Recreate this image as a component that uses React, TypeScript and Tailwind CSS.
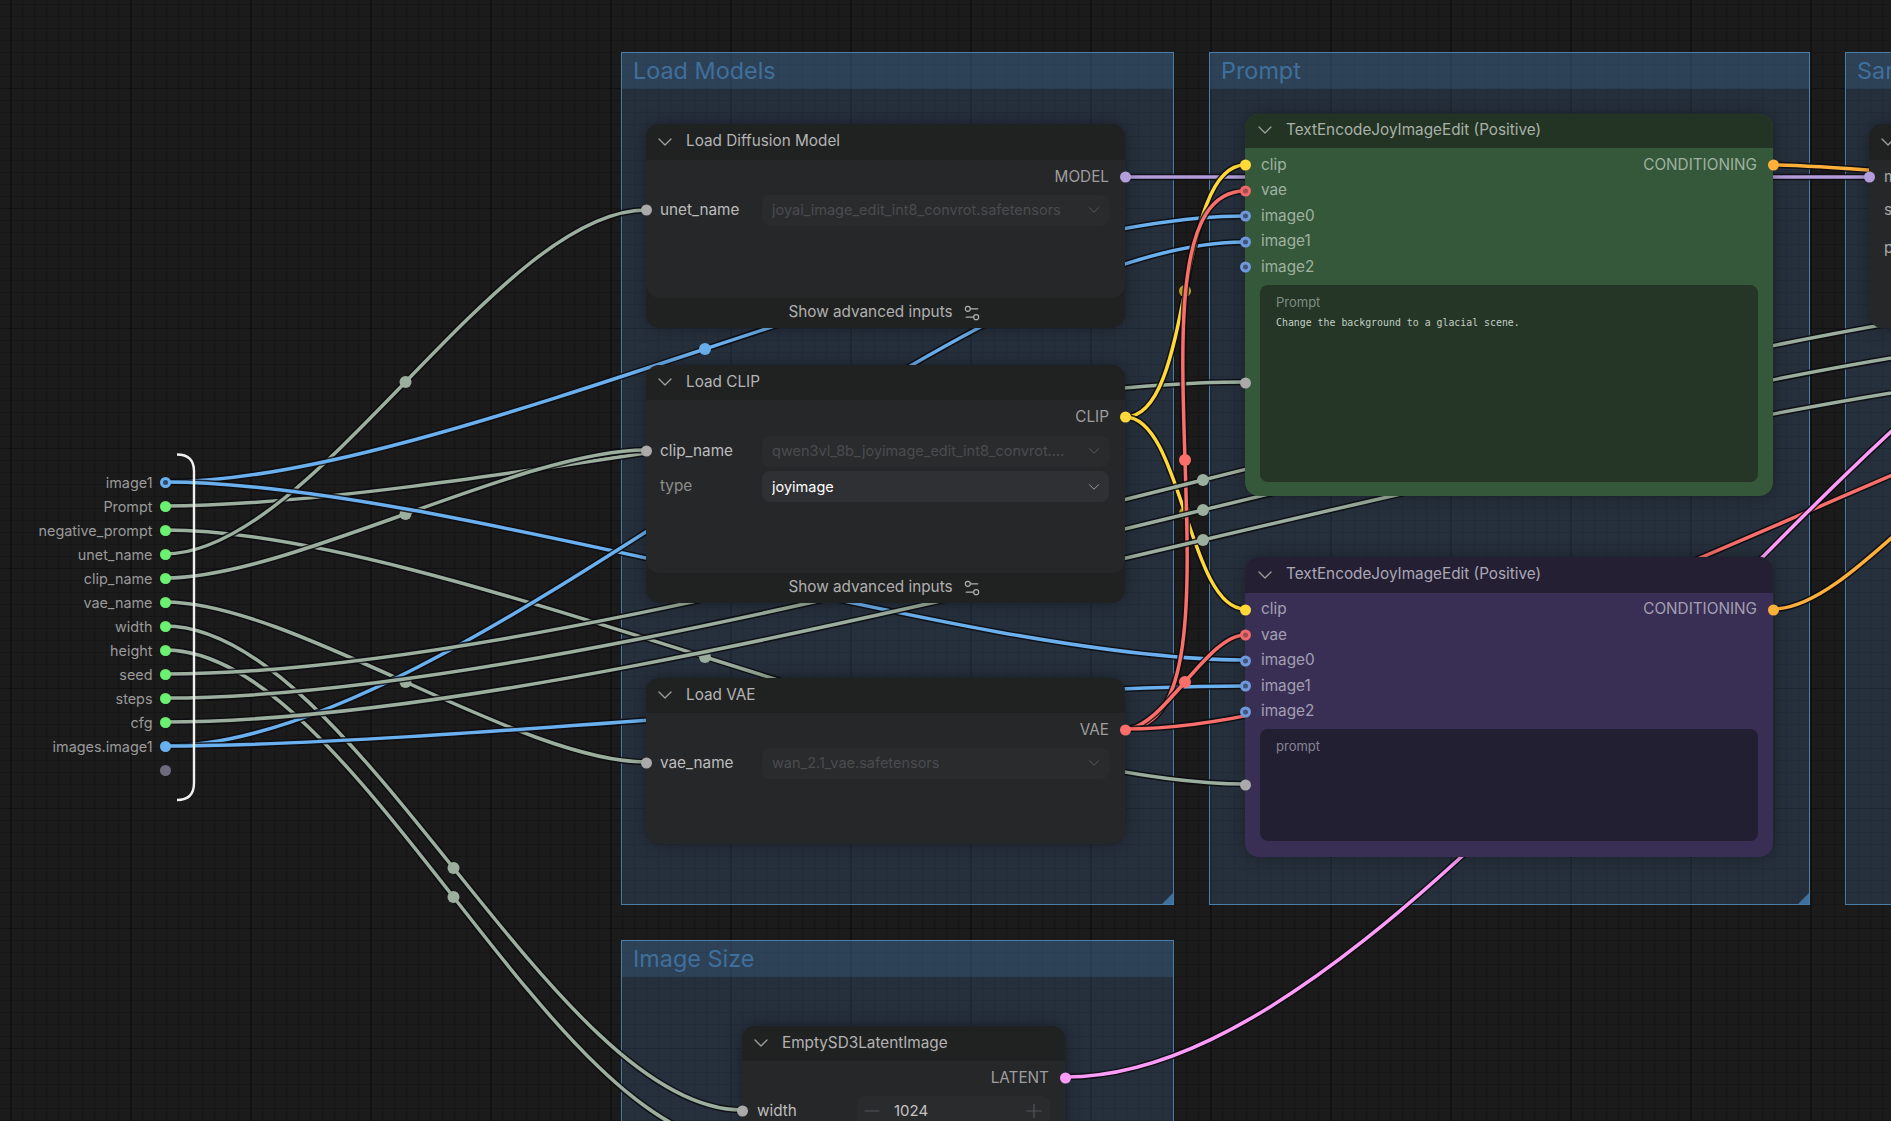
import React from "react";
import { ChevronDown, Minus, Plus, Settings2 } from "lucide-react";

// link colours
const GREY = "#9cae9d";
const BLUE = "#6bb0ee";
const YELLOW = "#ffd83a";
const RED = "#fb6f6a";
const PURPLE = "#b39ddb";
const ORANGE = "#ffb03b";
const PINK = "#ff9cf9";

type Link = { a: number[]; b: number[]; color: string; mid?: boolean; dim?: boolean };

const links: Link[] = [
  { a: [165, 506], b: [1245, 382], color: GREY, mid: true },
  { a: [165, 530], b: [1245, 784], color: GREY, mid: true },
  { a: [165, 554], b: [646, 210], color: GREY, mid: true },
  { a: [165, 578], b: [646, 450], color: GREY, mid: true },
  { a: [165, 602], b: [646, 762], color: GREY, mid: true },
  { a: [165, 626], b: [742, 1110], color: GREY, mid: true },
  { a: [165, 650], b: [742, 1144], color: GREY, mid: true },
  { a: [165, 482], b: [1245, 216], color: BLUE, mid: true },
  { a: [165, 482], b: [1245, 660], color: BLUE, mid: true },
  { a: [165, 746], b: [1245, 242], color: BLUE, mid: true },
  { a: [165, 746], b: [1245, 686], color: BLUE, mid: true },
  { a: [1125, 177], b: [1869, 177], color: PURPLE },
  { a: [1125, 417], b: [1245, 165], color: YELLOW, mid: true, dim: true },
  { a: [1125, 417], b: [1245, 609], color: YELLOW, mid: true, dim: true },
  { a: [1125, 729], b: [1245, 191], color: RED, mid: true },
  { a: [1125, 729], b: [1245, 635], color: RED, mid: true },
  { a: [1125, 729], b: [2505, 288], color: RED },
  { a: [165, 674], b: [2241, 286], color: GREY, mid: true },
  { a: [165, 698], b: [2241, 322], color: GREY, mid: true },
  { a: [165, 722], b: [2241, 358], color: GREY, mid: true },
  { a: [1065, 1077], b: [2300, 200], color: PINK },
  { a: [1773, 165], b: [2000, 178], color: ORANGE },
  { a: [1773, 609], b: [2040, 440], color: ORANGE },
];

function spline(a: number[], b: number[]) {
  const d = Math.hypot(b[0] - a[0], b[1] - a[1]) * 0.25;
  return `M${a[0]} ${a[1]} C${a[0] + d} ${a[1]} ${b[0] - d} ${b[1]} ${b[0]} ${b[1]}`;
}

const Links = () => (
  <svg className="absolute inset-0 h-[1121px] w-[1891px]" viewBox="0 0 1891 1121" fill="none">
    {links.map((l, i) => (
      <g key={i}>
        <path d={spline(l.a, l.b)} stroke="#0c0c10" strokeWidth={6.5} opacity={0.85} />
        <path d={spline(l.a, l.b)} stroke={l.color} strokeWidth={3.5} />
        {l.mid && (
          <circle
            cx={(l.a[0] + l.b[0]) / 2}
            cy={(l.a[1] + l.b[1]) / 2}
            r={6}
            fill={l.color}
            opacity={l.dim ? 0.7 : 1}
          />
        )}
      </g>
    ))}
  </svg>
);

const Group = ({ title, className }: { title: string; className: string }) => (
  <div className={`absolute border border-[#4a7da8] bg-[#476f9f40] ${className}`}>
    <div className="flex h-[36px] items-center bg-[#4678a840] pl-[11px] text-[23.4px] leading-none text-[#3f6f9b]">
      {title}
    </div>
    <div className="absolute bottom-0 right-0 h-[11px] w-[11px] bg-[#3f6f9b] [clip-path:polygon(100%_0,100%_100%,0_100%)]" />
  </div>
);

const Dot = ({ className }: { className: string }) => (
  <span className={`absolute top-1/2 h-[11px] w-[11px] -translate-y-1/2 rounded-full ${className}`} />
);

const Header = ({ title, className }: { title: string; className: string }) => (
  <div className={`flex items-center rounded-t-[14px] ${className}`}>
    <ChevronDown size={24} strokeWidth={1.25} className="ml-[7px] text-[#a0a0a0]" />
    <span className="ml-[9px] whitespace-nowrap text-[15.3px] text-[#b4b4b4]">{title}</span>
  </div>
);

const OutputRow = ({ label, dot }: { label: string; dot: string }) => (
  <div className="relative flex h-[19px] items-center justify-end pr-[16px] text-[15.3px] text-[#9e9e9e]">
    {label}
    <Dot className={`right-[-5.5px] ${dot}`} />
  </div>
);

const Combo = ({ label, value, off, linked }: { label: string; value: string; off?: boolean; linked?: boolean }) => (
  <div className="relative flex h-[31px] items-center pl-[14px] pr-[16px]">
    {linked && <Dot className="left-[-5.5px] bg-[#aaaaaa]" />}
    <span className={`w-[102px] shrink-0 text-[15.3px] ${linked ? "text-[#bdbdbd]" : "text-[#8d8d8d]"}`}>{label}</span>
    <div
      className={`flex h-full min-w-0 flex-1 items-center justify-between rounded-[8px] pl-[10px] pr-[6px] ${
        off ? "bg-[#2a2b2d] text-[14.5px] text-[#4b4b4d]" : "bg-[#2f3033] text-[14.5px] text-white"
      }`}
    >
      <span className="truncate">{value}</span>
      <ChevronDown size={18} strokeWidth={1.3} className={`shrink-0 ${off ? "text-[#5c5c5e]" : "text-[#a0a0a0]"}`} />
    </div>
  </div>
);

const AdvancedFooter = () => (
  <div className="flex h-[30.5px] items-center justify-center gap-[9px] pr-[1px] text-[15.3px] text-[#b0b0b0]">
    Show advanced inputs
    <Settings2 size={20} strokeWidth={1.4} />
  </div>
);

const EncodeRow = ({ label, dot, right, text }: { label: string; dot: string; right?: string; text: string }) => (
  <div className={`relative flex h-[25.5px] items-center justify-between pl-[16px] pr-[16px] text-[15.3px] ${text}`}>
    <span>{label}</span>
    {right && <span>{right}</span>}
    <Dot className={`left-[-5.5px] ${dot}`} />
    {right && <Dot className="right-[-5.5px] bg-[#ffb03b]" />}
  </div>
);

const ring = "border-[3px] border-[#7098dc] bg-[#3f5677]";
const redRing = "border-[3px] border-[#f0696a] bg-[#a04c50]";

const ioRows = [
  ["image1", "ring"],
  ["Prompt", "green"],
  ["negative_prompt", "green"],
  ["unet_name", "green"],
  ["clip_name", "green"],
  ["vae_name", "green"],
  ["width", "green"],
  ["height", "green"],
  ["seed", "green"],
  ["steps", "green"],
  ["cfg", "green"],
  ["images.image1", "blue"],
  ["", "empty"],
];

const dotColor: Record<string, string> = {
  ring: "border-[3px] border-[#6bb0ee] bg-[#2f4a6a]",
  blue: "bg-[#6bb0ee]",
  green: "bg-[#6bf06f]",
  empty: "bg-[#6e6b7c]",
};

const InputPanel = () => (
  <div className="absolute left-0 top-[470.5px] w-[170.5px]">
    {ioRows.map(([name, kind], i) => (
      <div key={i} className="flex h-[24px] items-center justify-end gap-[7px] text-[14.4px] text-[#9a9a9a]">
        <span>{name}</span>
        <span className={`h-[11px] w-[11px] rounded-full ${dotColor[kind]}`} />
      </div>
    ))}
    <svg className="absolute left-[176px] top-[-18px] h-[352px] w-[20px]" viewBox="0 0 20 352" fill="none">
      <path d="M1 1.5 Q18 1.5 18 18 V330 Q18 347 1 347" stroke="#f0f0f0" strokeWidth={2.4} />
    </svg>
  </div>
);

const nodeBase = "absolute rounded-[14px] bg-[#202121] shadow-[0_0_18px_rgba(0,0,0,0.35)]";

export default function App() {
  return (
    <div className="relative h-[1121px] w-[1891px] overflow-hidden bg-[#1b1b1b] bg-[linear-gradient(to_right,#121212_2px,transparent_2px),linear-gradient(to_bottom,#121212_1px,transparent_1px),linear-gradient(to_right,#161616_1px,transparent_1px),linear-gradient(to_bottom,#161616_1px,transparent_1px)] bg-[size:120px_120px,120px_120px,12px_12px,12px_12px] bg-[position:10px_88px,10px_88px,10px_4px,10px_4px] font-[family-name:Inter,sans-serif]">
      <Group title="Load Models" className="left-[621px] top-[52px] h-[853px] w-[553px]" />
      <Group title="Prompt" className="left-[1209px] top-[52px] h-[853px] w-[601px]" />
      <Group title="Sampler" className="left-[1845px] top-[52px] h-[853px] w-[400px]" />
      <Group title="Image Size" className="left-[621px] top-[940px] h-[300px] w-[553px]" />

      <Links />

      {/* Load Diffusion Model */}
      <div className={`${nodeBase} left-[646px] top-[123.5px] w-[479px]`}>
        <Header title="Load Diffusion Model" className="h-[36px] bg-[#202121]" />
        <div className="flex h-[138px] flex-col gap-[8px] rounded-b-[14px] bg-[#262729] pt-[8px]">
          <OutputRow label="MODEL" dot="bg-[#b39ddb]" />
          <Combo label="unet_name" value="joyai_image_edit_int8_convrot.safetensors" off linked />
        </div>
        <AdvancedFooter />
      </div>

      {/* Load CLIP */}
      <div className={`${nodeBase} left-[646px] top-[364.5px] w-[479px]`}>
        <Header title="Load CLIP" className="h-[35px] bg-[#202121]" />
        <div className="flex h-[173px] flex-col rounded-b-[14px] bg-[#262729] pt-[8px]">
          <OutputRow label="CLIP" dot="bg-[#ffd83a]" />
          <div className="mt-[9px] flex flex-col gap-[4.5px]">
            <Combo label="clip_name" value="qwen3vl_8b_joyimage_edit_int8_convrot.…" off linked />
            <Combo label="type" value="joyimage" />
          </div>
        </div>
        <AdvancedFooter />
      </div>

      {/* Load VAE */}
      <div className={`${nodeBase} left-[646px] top-[677.5px] w-[479px]`}>
        <Header title="Load VAE" className="h-[35px] bg-[#202121]" />
        <div className="flex h-[131px] flex-col gap-[8px] rounded-b-[14px] bg-[#262729] pt-[8px]">
          <OutputRow label="VAE" dot="bg-[#ff6e6a]" />
          <Combo label="vae_name" value="wan_2.1_vae.safetensors" off linked />
        </div>
      </div>

      {/* EmptySD3LatentImage */}
      <div className={`${nodeBase} left-[742px] top-[1025.5px] w-[323px]`}>
        <Header title="EmptySD3LatentImage" className="h-[35px] bg-[#202121]" />
        <div className="flex h-[120px] flex-col gap-[8px] bg-[#262729] pt-[8px]">
          <OutputRow label="LATENT" dot="bg-[#ff9cf9]" />
          <div className="relative flex h-[31px] items-center pl-[15px] pr-[15px]">
            <Dot className="left-[-5.5px] bg-[#aaaaaa]" />
            <span className="w-[100px] shrink-0 text-[15.3px] text-[#bdbdbd]">width</span>
            <div className="flex h-full flex-1 items-center rounded-[8px] bg-[#2a2b2d] pl-[3px] pr-[4px] text-[15px] text-[#c4c4c4]">
              <Minus size={24} strokeWidth={1.2} className="text-[#55555a]" />
              <span className="ml-[10px] flex-1">1024</span>
              <Plus size={24} strokeWidth={1.2} className="text-[#55555a]" />
            </div>
          </div>
        </div>
      </div>

      {/* TextEncodeJoyImageEdit, positive */}
      <div className="absolute left-[1245px] top-[113.5px] h-[382px] w-[528px] rounded-[14px] bg-[#35583a] shadow-[0_0_18px_rgba(0,0,0,0.3)]">
        <Header title="TextEncodeJoyImageEdit (Positive)" className="h-[34.5px] bg-[#233324] pb-[1px] [&>svg]:ml-[8px] [&>span]:text-[#a8b2a8]" />
        <div className="pt-[4.5px]">
          <EncodeRow label="clip" dot="bg-[#ffd83a]" right="CONDITIONING" text="text-[#9fb2a1]" />
          <EncodeRow label="vae" dot={redRing} text="text-[#9fb2a1]" />
          <EncodeRow label="image0" dot={ring} text="text-[#9fb2a1]" />
          <EncodeRow label="image1" dot={ring} text="text-[#9fb2a1]" />
          <EncodeRow label="image2" dot={ring} text="text-[#9fb2a1]" />
        </div>
        <div className="relative mx-[15px] mt-[4.5px] h-[197px] rounded-[8px] bg-[#253526] px-[16px] pt-[10px]">
          <Dot className="left-[-20.5px] bg-[#aaaaaa]" />
          <div className="text-[13px] leading-[15px] text-[#7f8f81]">Prompt</div>
          <div className="mt-[5px] font-[family-name:'DejaVu_Sans_Mono',monospace] text-[9.9px] leading-[15px] text-[#c3d0c4]">
            Change the background to a glacial scene.
          </div>
        </div>
      </div>

      {/* TextEncodeJoyImageEdit, negative */}
      <div className="absolute left-[1245px] top-[556.5px] h-[300px] w-[528px] rounded-[14px] bg-[#392f55] shadow-[0_0_18px_rgba(0,0,0,0.3)]">
        <Header title="TextEncodeJoyImageEdit (Positive)" className="h-[36px] bg-[#241f33] [&>svg]:ml-[8px] [&>span]:text-[#aba8b6]" />
        <div className="pt-[4.5px]">
          <EncodeRow label="clip" dot="bg-[#ffd83a]" right="CONDITIONING" text="text-[#a3a0b2]" />
          <EncodeRow label="vae" dot={redRing} text="text-[#a3a0b2]" />
          <EncodeRow label="image0" dot={ring} text="text-[#a3a0b2]" />
          <EncodeRow label="image1" dot={ring} text="text-[#a3a0b2]" />
          <EncodeRow label="image2" dot={ring} text="text-[#a3a0b2]" />
        </div>
        <div className="relative mx-[15px] mt-[4.5px] h-[112px] rounded-[8px] bg-[#231f32] px-[16px] pt-[10px]">
          <Dot className="left-[-20.5px] top-[55.5px] bg-[#aaaaaa]" />
          <div className="text-[13px] leading-[15px] text-[#868394]">prompt</div>
        </div>
      </div>

      {/* Sampler, mostly out of view */}
      <div className={`${nodeBase} left-[1869px] top-[123.5px] w-[300px]`}>
        <Header title="KSampler" className="h-[36px] bg-[#202121]" />
        <div className="h-[168px] rounded-b-[14px] bg-[#262729] pl-[15px] text-[15.3px] text-[#a8a8a8]">
          <div className="relative flex h-[35px] items-center">
            <Dot className="left-[-20.5px] bg-[#b39ddb]" />
            model
          </div>
          <div className="flex h-[31px] items-center">seed</div>
          <div className="mt-[5px] flex h-[36px] items-center">positive</div>
        </div>
      </div>

      <InputPanel />
    </div>
  );
}
